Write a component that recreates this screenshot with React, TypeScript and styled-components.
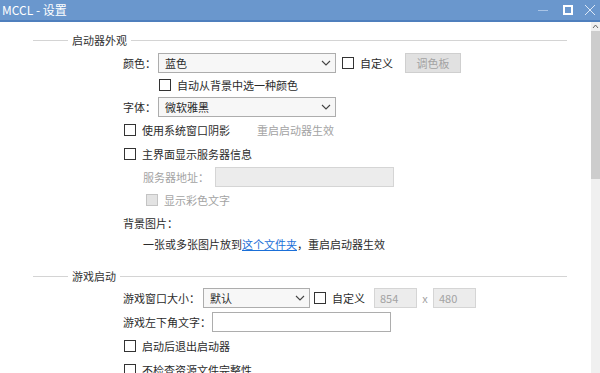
import React from "react";
import styled, { createGlobalStyle } from "styled-components";

const GlobalStyle = createGlobalStyle`
  html, body { margin: 0; padding: 0; background: #fff; }
  body { font-family: "Noto Sans CJK SC", "Noto Sans", sans-serif; }
  * { box-sizing: border-box; }
`;

const Window = styled.div`
  width: 600px;
  height: 373px;
  display: flex;
  flex-direction: column;
  overflow: hidden;
  background: #fff;
  font-size: 11px;
  color: #2b2b2b;
`;

const TitleBar = styled.div`
  height: 22px;
  flex: none;
  display: flex;
  align-items: center;
  background: #6a97cd;
  border-bottom: 2px solid #4f7fbd;
  padding-left: 2px;
`;

const Title = styled.div`
  flex: 1;
  color: #fff;
  font-size: 12px;
  line-height: 20px;
`;

const Controls = styled.div`
  display: flex;
  align-items: center;
  height: 20px;
`;

const CtrlBtn = styled.div<{ w: number }>`
  width: ${(p) => p.w}px;
  height: 20px;
  display: flex;
  align-items: center;
  justify-content: center;
`;

const Main = styled.div`
  flex: 1;
  display: flex;
  min-height: 0;
`;

const Content = styled.div`
  flex: 1;
  display: flex;
  flex-direction: column;
  padding-top: 7px;
`;

const Scrollbar = styled.div`
  width: 9px;
  flex: none;
  background: #f0f0f0;
  display: flex;
  flex-direction: column;
  align-items: center;
`;

const ScrollArrow = styled.div`
  height: 9px;
  display: flex;
  align-items: center;
  justify-content: center;
`;

const Thumb = styled.div`
  width: 9px;
  height: 148px;
  background: #cdcdcd;
`;

const SectionHeader = styled.div<{ h: number }>`
  height: ${(p) => p.h}px;
  display: flex;
  align-items: center;
  padding-left: 33px;
  padding-right: 24px;
  flex: none;
`;

const SectionLine = styled.div<{ grow?: boolean }>`
  height: 1px;
  background: #d4d4d4;
  width: ${(p) => (p.grow ? "auto" : "35px")};
  flex: ${(p) => (p.grow ? 1 : "none")};
`;

const SectionTitle = styled.div`
  padding: 0 4px;
  color: #333;
`;

const Row = styled.div<{ h: number; indent: number }>`
  height: ${(p) => p.h}px;
  display: flex;
  align-items: center;
  padding-left: ${(p) => p.indent}px;
  flex: none;
  white-space: nowrap;
`;

const Label = styled.div<{ w?: number; dim?: boolean }>`
  width: ${(p) => (p.w ? `${p.w}px` : "auto")};
  flex: none;
  color: ${(p) => (p.dim ? "#a3a3a3" : "#2b2b2b")};
`;

const Select = styled.div<{ w: number }>`
  width: ${(p) => p.w}px;
  height: 20px;
  border: 1px solid #adadad;
  background: #f7f7f7;
  display: flex;
  align-items: center;
  padding: 0 4px 0 6px;
  flex: none;
`;

const SelectText = styled.div`
  flex: 1;
`;

const TextBox = styled.div<{ w: number; disabled?: boolean }>`
  width: ${(p) => p.w}px;
  height: 20px;
  border: 1px solid ${(p) => (p.disabled ? "#d5d5d5" : "#adadad")};
  background: ${(p) => (p.disabled ? "#ececec" : "#fff")};
  color: #a3a3a3;
  display: flex;
  align-items: center;
  padding-left: 5px;
  flex: none;
`;

const Check = styled.div<{ disabled?: boolean }>`
  width: 12px;
  height: 12px;
  border: 1px solid ${(p) => (p.disabled ? "#c4c4c4" : "#333")};
  background: ${(p) => (p.disabled ? "#e3e3e3" : "#fff")};
  flex: none;
  margin-right: 6px;
`;

const Button = styled.div`
  width: 56px;
  height: 20px;
  background: #e1e1e1;
  border: 1px solid #cfcfcf;
  color: #a3a3a3;
  display: flex;
  align-items: center;
  justify-content: center;
  flex: none;
`;

const Gap = styled.div<{ w: number }>`
  width: ${(p) => p.w}px;
  flex: none;
`;

const Link = styled.span`
  color: #1a6fd8;
  text-decoration: underline;
`;

const Spacer = styled.div<{ h: number }>`
  height: ${(p) => p.h}px;
  flex: none;
`;

const Chevron = () => (
  <svg width="10" height="6" viewBox="0 0 10 6">
    <path d="M1 1 L5 5 L9 1" fill="none" stroke="#444" strokeWidth="1.1" />
  </svg>
);

export default function App() {
  return (
    <>
      <GlobalStyle />
      <Window>
        <TitleBar>
          <Title>MCCL - 设置</Title>
          <Controls>
            <CtrlBtn w={26}>
              <svg width="12" height="10" viewBox="0 0 12 10">
                <path d="M1 5.5 H11" stroke="#a9c4e6" strokeWidth="1" />
              </svg>
            </CtrlBtn>
            <CtrlBtn w={24}>
              <svg width="10" height="10" viewBox="0 0 10 10">
                <rect x="0.5" y="0.5" width="9" height="9" fill="none" stroke="#fff" strokeWidth="1" />
                <rect x="1.5" y="1.5" width="7" height="7" fill="none" stroke="#fff" strokeWidth="1" />
              </svg>
            </CtrlBtn>
            <CtrlBtn w={20}>
              <svg width="12" height="12" viewBox="0 0 12 12">
                <path d="M1 1 L11 11 M11 1 L1 11" stroke="#dce8f6" strokeWidth="1" />
              </svg>
            </CtrlBtn>
          </Controls>
        </TitleBar>
        <Main>
          <Content>
            <SectionHeader h={22}>
              <SectionLine />
              <SectionTitle>启动器外观</SectionTitle>
              <SectionLine grow />
            </SectionHeader>
            <Row h={23} indent={123}>
              <Label w={35}>颜色：</Label>
              <Select w={178}>
                <SelectText>蓝色</SelectText>
                <Chevron />
              </Select>
              <Gap w={6} />
              <Check />
              <Label>自定义</Label>
              <Gap w={12} />
              <Button>调色板</Button>
            </Row>
            <Row h={22} indent={159}>
              <Check />
              <Label>自动从背景中选一种颜色</Label>
            </Row>
            <Row h={22} indent={123}>
              <Label w={35}>字体：</Label>
              <Select w={178}>
                <SelectText>微软雅黑</SelectText>
                <Chevron />
              </Select>
            </Row>
            <Row h={24} indent={124}>
              <Check />
              <Label>使用系统窗口阴影</Label>
              <Gap w={27} />
              <Label dim>重启启动器生效</Label>
            </Row>
            <Row h={24} indent={124}>
              <Check />
              <Label>主界面显示服务器信息</Label>
            </Row>
            <Row h={22} indent={143}>
              <Label w={72} dim>服务器地址：</Label>
              <TextBox w={179} disabled />
            </Row>
            <Row h={24} indent={146}>
              <Check disabled />
              <Label dim>显示彩色文字</Label>
            </Row>
            <Row h={22} indent={123}>
              <Label>背景图片：</Label>
            </Row>
            <Row h={20} indent={143}>
              <Label>
                一张或多张图片放到<Link>这个文件夹</Link>，重启启动器生效
              </Label>
            </Row>
            <Spacer h={12} />
            <SectionHeader h={20}>
              <SectionLine />
              <SectionTitle>游戏启动</SectionTitle>
              <SectionLine grow />
            </SectionHeader>
            <Row h={24} indent={123}>
              <Label w={80}>游戏窗口大小：</Label>
              <Select w={107}>
                <SelectText>默认</SelectText>
                <Chevron />
              </Select>
              <Gap w={4} />
              <Check />
              <Label>自定义</Label>
              <Gap w={9} />
              <TextBox w={43} disabled>854</TextBox>
              <Label w={16} dim style={{ textAlign: "center" }}>x</Label>
              <TextBox w={43} disabled>480</TextBox>
            </Row>
            <Row h={24} indent={123}>
              <Label w={89}>游戏左下角文字：</Label>
              <TextBox w={179} />
            </Row>
            <Row h={24} indent={124}>
              <Check />
              <Label>启动后退出启动器</Label>
            </Row>
            <Row h={24} indent={124}>
              <Check />
              <Label>不检查资源文件完整性</Label>
            </Row>
          </Content>
          <Scrollbar>
            <ScrollArrow>
              <svg width="7" height="5" viewBox="0 0 7 5">
                <path d="M1 4 L3.5 1 L6 4" fill="none" stroke="#666" strokeWidth="1" />
              </svg>
            </ScrollArrow>
            <Thumb />
          </Scrollbar>
        </Main>
      </Window>
    </>
  );
}
